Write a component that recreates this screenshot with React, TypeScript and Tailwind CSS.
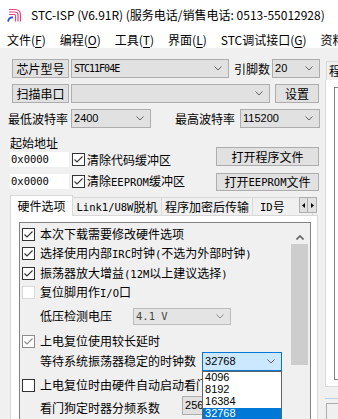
import { ReactNode } from "react";
import clsx from "clsx";

const lat = "font-['DejaVu_Sans_Mono',monospace] text-[10.5px]";
const num = "font-['Liberation_Sans',sans-serif] text-[11px]";

const Chevron = ({ up = false, color = "#606060" }: { up?: boolean; color?: string }) => (
  <svg width="8" height="5" viewBox="0 0 8 5" className="shrink-0">
    <path
      d={up ? "M0.5 4.5 L4 1 L7.5 4.5" : "M0.5 0.5 L4 4 L7.5 0.5"}
      fill="none"
      stroke={color}
      strokeWidth={up ? 1.6 : 1}
    />
  </svg>
);

const Btn = ({ className, children }: { className?: string; children: ReactNode }) => (
  <div
    className={clsx(
      "flex shrink-0 items-center justify-center whitespace-nowrap border border-[#adadad] bg-[#e1e1e1]",
      className,
    )}
  >
    {children}
  </div>
);

const Combo = ({
  className,
  tone = "normal",
  font = num,
  text,
}: {
  className?: string;
  tone?: "normal" | "focus" | "off";
  font?: string;
  text: string;
}) => (
  <div
    className={clsx(
      "flex shrink-0 items-center justify-between border pl-[2px] pr-[6px]",
      tone === "normal" && "border-[#adadad] bg-[#e1e1e1] text-black",
      tone === "focus" && "border-[#0078d7] bg-[#cce8ff] text-black",
      tone === "off" && "border-[#bcbcbc] bg-[#e4e4e4] text-[#444444]",
      className,
    )}
  >
    <span className={clsx("whitespace-pre", font)}>{text}</span>
    <Chevron color={tone === "off" ? "#8a8a8a" : "#606060"} />
  </div>
);

const Check = ({ on = false, tone = "dark" }: { on?: boolean; tone?: "dark" | "gray" | "off" }) => (
  <div
    className={clsx(
      "flex h-[13px] w-[13px] shrink-0 items-center justify-center border bg-white",
      tone === "dark" && "border-[#333333]",
      tone === "gray" && "border-[#8c8c8c]",
      tone === "off" && "border-[#dadada]",
    )}
  >
    {on && (
      <svg width="11" height="11" viewBox="0 0 11 11">
        <path
          d="M1.5 5.5 L4 8 L9.5 2.5"
          fill="none"
          stroke={tone === "gray" ? "#8c8c8c" : "#333333"}
          strokeWidth="1.1"
        />
      </svg>
    )}
  </div>
);

const Logo = () => (
  <svg width="16" height="14" viewBox="0 0 16 14" className="ml-[7px] shrink-0">
    <g fill="none" stroke="#e8447c" strokeWidth="1.2">
      <path d="M2 1.5 H8 Q13.5 1.5 13.5 7 V13.5" />
      <path d="M2 4 H8 Q11 4 11 7 V13.5" />
      <path d="M2 6.5 H7.5 Q8.5 6.5 8.5 8 V13.5" />
    </g>
    <path d="M1 13.5 Q2 9 6 9.5" fill="none" stroke="#1f4fd6" strokeWidth="1.8" />
  </svg>
);

const menu = [
  ["文件(", "F", ")"],
  ["编程(", "O", ")"],
  ["工具(", "T", ")"],
  ["界面(", "L", ")"],
  ["STC调试接口(", "G", ")"],
  ["资料", "", ""],
];

const Row = ({ h, children }: { h: string; children: ReactNode }) => (
  <div className={clsx("flex items-center whitespace-nowrap", h)}>{children}</div>
);

export default function App() {
  return (
    <div className="relative h-[419px] w-[338px] overflow-hidden bg-[#f0f0f0] font-['Noto_Sans_CJK_SC',sans-serif] text-[12px] leading-none text-black">
      <div className="flex h-[30px] items-center bg-white">
        <Logo />
        <span className="ml-[8px] whitespace-nowrap">STC-ISP (V6.91R) (服务电话/销售电话: 0513-55012928)</span>
      </div>

      <div className="flex h-[18px] items-center gap-[14px] whitespace-nowrap bg-white pl-[7px] pt-[2px]">
        {menu.map(([a, k, b], i) => (
          <span key={i}>
            {a}
            <span className="underline underline-offset-2">{k}</span>
            {b}
          </span>
        ))}
      </div>

      <div className="flex">
        <div className="w-[322px] shrink-0 pt-[11px]">
          <div className="flex h-[19px] items-center">
            <Btn className="ml-[12px] h-[19px] w-[57px]">芯片型号</Btn>
            <Combo
              className="ml-[2px] h-[19px] w-[158px]"
              font="font-['DejaVu_Sans_Mono',monospace] text-[10px] tracking-[-1px]"
              text="STC11F04E"
            />
            <span className="ml-[5px] whitespace-nowrap">引脚数</span>
            <Combo className="ml-[2px] h-[19px] w-[48px]" text="20" />
          </div>

          <div className="mt-[6px] flex h-[19px] items-center">
            <Btn className="ml-[12px] h-[19px] w-[57px]">扫描串口</Btn>
            <Combo className="ml-[2px] h-[19px] w-[199px]" text="" />
            <Btn className="ml-[5px] h-[19px] w-[44px]">设置</Btn>
          </div>

          <div className="mt-[6px] flex h-[19px] items-center whitespace-nowrap">
            <span className="ml-[8px]">最低波特率</span>
            <Combo className="ml-[3px] h-[19px] w-[80px]" text="2400" />
            <span className="ml-[24px]">最高波特率</span>
            <Combo className="ml-[5px] h-[19px] w-[80px]" text="115200" />
          </div>

          <div className="mt-[9px] flex items-start">
            <div className="ml-[10px] w-[200px]">
              <div className="h-[14px]">起始地址</div>
              <div className="mt-[1px] flex h-[15px] items-center">
                <div className={clsx("flex h-[15px] w-[59px] items-center bg-white pl-[1px]", lat)}>0x0000</div>
                <div className="ml-[3px]">
                  <Check on />
                </div>
                <span className="ml-[2px] whitespace-nowrap">清除代码缓冲区</span>
              </div>
              <div className="mt-[7px] flex h-[15px] items-center">
                <div className={clsx("flex h-[15px] w-[59px] items-center bg-white pl-[1px]", lat)}>0x0000</div>
                <div className="ml-[3px]">
                  <Check on />
                </div>
                <span className="ml-[2px] whitespace-nowrap">
                  清除<span className={lat}>EEPROM</span>缓冲区
                </span>
              </div>
            </div>
            <div className="ml-[6px]">
              <Btn className="mt-[10px] h-[19px] w-[103px]">打开程序文件</Btn>
              <Btn className="mt-[7px] h-[18px] w-[103px]">
                打开<span className={lat}>EEPROM</span>文件
              </Btn>
            </div>
          </div>

          <div className="relative ml-[10px] mt-[4px] flex h-[21px] w-[308px] items-end overflow-hidden">
            <div className="relative z-10 flex h-[21px] w-[63px] shrink-0 items-center justify-center border border-b-0 border-[#d9d9d9] bg-white">
              硬件选项
            </div>
            <div className="flex h-[19px] w-[89px] shrink-0 items-center justify-center whitespace-nowrap border border-l-0 border-b-0 border-[#d9d9d9]">
              <span className={lat}>Link1/U8W</span>脱机
            </div>
            <div className="flex h-[19px] w-[91px] shrink-0 items-center justify-center whitespace-nowrap border border-l-0 border-b-0 border-[#d9d9d9]">
              程序加密后传输
            </div>
            <div className="flex h-[19px] w-[60px] shrink-0 items-center whitespace-nowrap border border-l-0 border-b-0 border-[#d9d9d9] pl-[7px]">
              <span className={lat}>ID</span>号
            </div>
            <div className="absolute right-[1px] top-[2px] flex">
              <div className="flex h-[16px] w-[9px] items-center justify-center border border-[#adadad] bg-[#e1e1e1]">
                <svg width="3" height="5" viewBox="0 0 3 5">
                  <path d="M3 0 L0 2.5 L3 5 Z" fill="#000" />
                </svg>
              </div>
              <div className="flex h-[16px] w-[9px] items-center justify-center border border-l-0 border-[#adadad] bg-[#e1e1e1]">
                <svg width="3" height="5" viewBox="0 0 3 5">
                  <path d="M0 0 L3 2.5 L0 5 Z" fill="#000" />
                </svg>
              </div>
            </div>
          </div>

          <div className="-mt-px ml-[10px] h-[230px] w-[308px] border border-[#d9d9d9] bg-white pl-[8px] pt-[6px]">
            <div className="flex h-[220px] w-[292px] border border-[#828282] bg-[#f0f0f0]">
              <div className="flex-1 pt-[1px]">
                <Row h="h-[20px]">
                  <div className="ml-[2px]">
                    <Check on />
                  </div>
                  <span className="ml-[5px]">本次下载需要修改硬件选项</span>
                </Row>
                <Row h="h-[19px]">
                  <div className="ml-[2px]">
                    <Check on />
                  </div>
                  <span className="ml-[5px]">
                    选择使用内部<span className={lat}>IRC</span>时钟<span className={lat}>(</span>不选为外部时钟
                    <span className={lat}>)</span>
                  </span>
                </Row>
                <Row h="h-[20px]">
                  <div className="ml-[2px]">
                    <Check on />
                  </div>
                  <span className="ml-[5px]">
                    振荡器放大增益<span className={lat}>(12M</span>以上建议选择<span className={lat}>)</span>
                  </span>
                </Row>
                <Row h="h-[19px]">
                  <div className="ml-[2px]">
                    <Check tone="off" />
                  </div>
                  <span className="ml-[5px]">
                    复位脚用作<span className={lat}>I/O</span>口
                  </span>
                </Row>
                <Row h="h-[28px]">
                  <span className="ml-[20px]">低压检测电压</span>
                  <Combo className="ml-[21px] h-[17px] w-[98px]" tone="off" font={lat} text="4.1 V" />
                </Row>
                <Row h="h-[22px]">
                  <div className="ml-[2px]">
                    <Check on tone="gray" />
                  </div>
                  <span className="ml-[5px]">上电复位使用较长延时</span>
                </Row>
                <Row h="h-[18px]">
                  <span className="ml-[20px]">等待系统振荡器稳定的时钟数</span>
                  <div className="relative z-10 ml-[6px]">
                    <Combo className="h-[19px] w-[80px]" tone="focus" text="32768" />
                    <div className="absolute left-0 top-[19px] w-[80px] border border-[#646464] bg-white">
                      {["4096", "8192", "16384", "32768"].map((v, i) => (
                        <div
                          key={v}
                          className={clsx(
                            "flex h-[12px] items-center pl-[2px]",
                            num,
                            i === 3 ? "bg-[#0078d7] text-white" : "text-black",
                          )}
                        >
                          {v}
                        </div>
                      ))}
                    </div>
                  </div>
                </Row>
                <Row h="h-[30px]">
                  <div className="ml-[2px]">
                    <Check />
                  </div>
                  <span className="ml-[5px]">上电复位时由硬件自动启动看门狗</span>
                </Row>
                <Row h="h-[16px]">
                  <span className="ml-[20px]">看门狗定时器分频系数</span>
                  <Combo className="-mt-[6px] ml-[22px] h-[19px] w-[80px]" text="256" />
                </Row>
              </div>
              <div className="mr-[2px] flex w-[17px] flex-col">
                <div className="flex h-[21px] items-end justify-center pb-[4px]">
                  <Chevron up />
                </div>
                <div className="h-[121px] bg-[#cdcdcd]" />
              </div>
            </div>
          </div>
        </div>

        <div className="flex-1 pt-[13px]">
          <div className="ml-[4px] flex h-[19px] items-center overflow-hidden whitespace-nowrap border border-b-0 border-r-0 border-[#d9d9d9] pl-[2px]">
            程序
          </div>
          <div className="ml-[3px] h-[307px] border-b border-l border-[#d9d9d9] bg-white pl-[8px] pt-[7px]">
            <div className="h-[293px] border-b border-l border-t border-[#828282] bg-white" />
          </div>
          <div className="ml-[3px] mt-[11px] h-px bg-[#b9d1ea]" />
          <div className="ml-[4px] mt-[4px] h-[30px] border border-r-0 border-[#adadad] bg-[#f0f0f0]" />
        </div>
      </div>
    </div>
  );
}
